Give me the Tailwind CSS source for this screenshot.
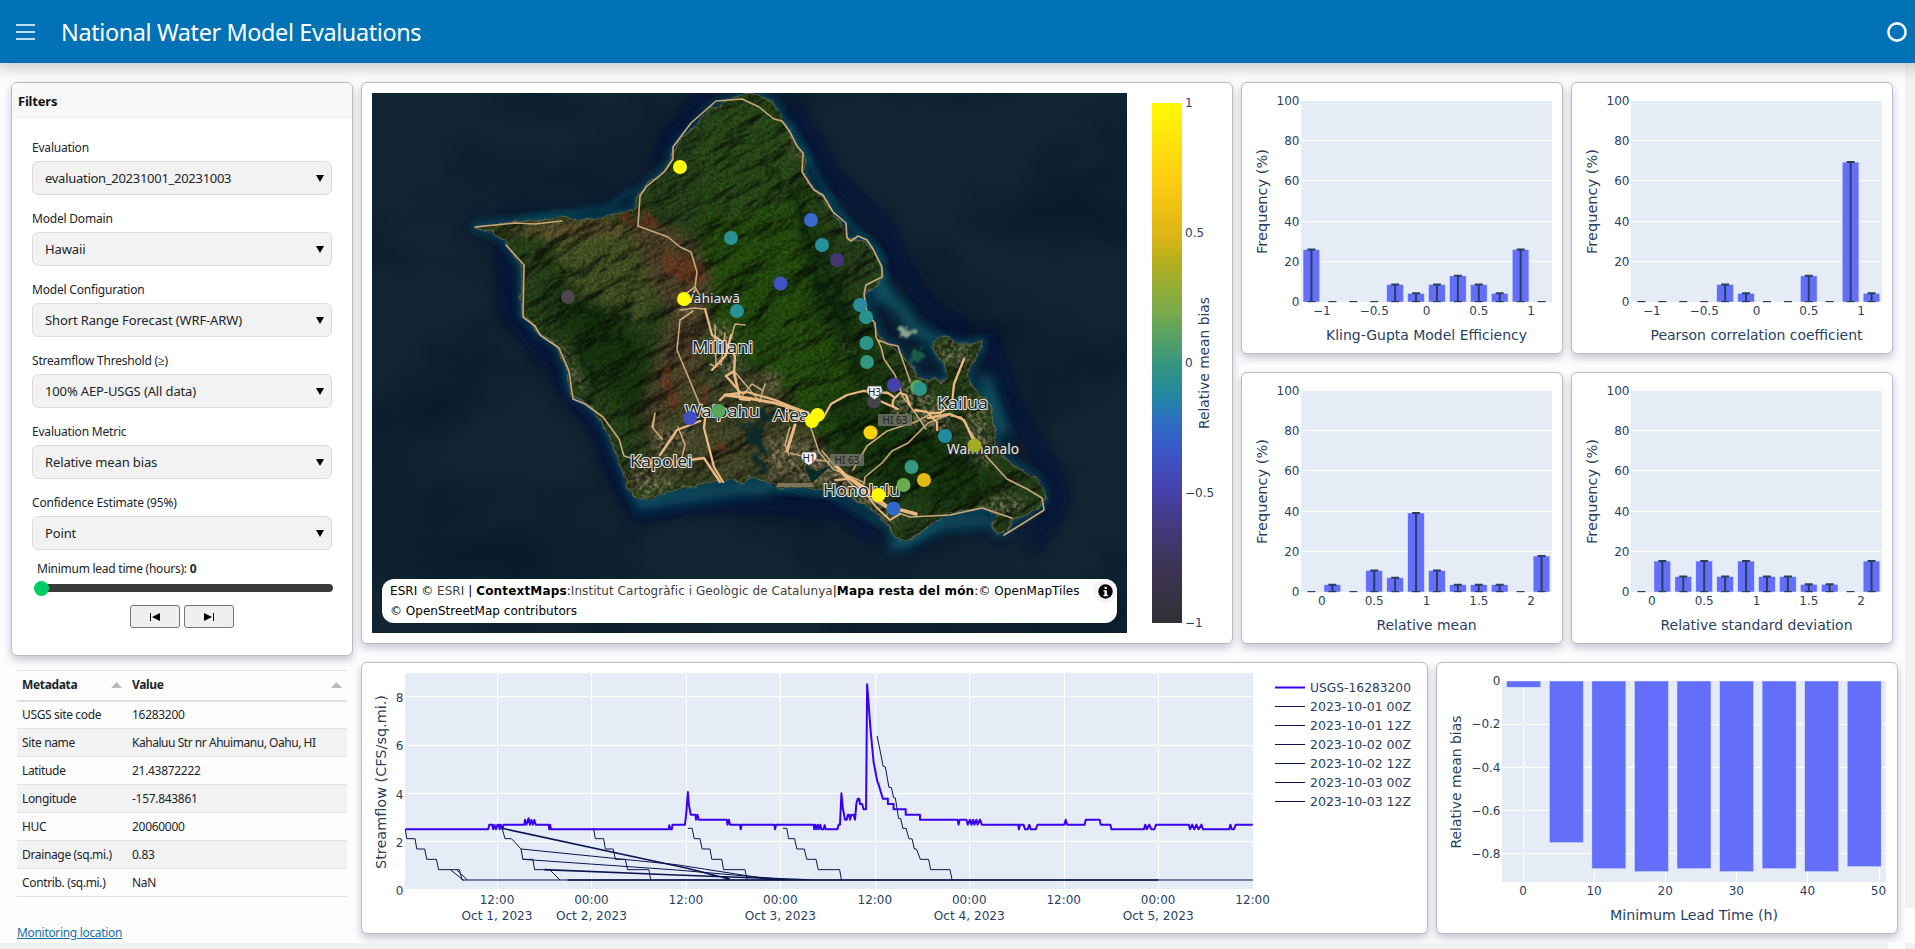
<!DOCTYPE html>
<html lang="en">
<head>
<meta charset="utf-8">
<title>National Water Model Evaluations</title>
<script src="https://cdn.jsdelivr.net/npm/@tailwindcss/browser@4"></script>
</head>
<body class="w-[1915px] h-[949px] overflow-hidden bg-[#fdfdfe] font-['Noto_Sans','Open_Sans',sans-serif] text-[#212529] flex flex-col">
<header class="h-[63px] shrink-0 bg-[#0072b5] flex items-center justify-between pl-4 pr-2 text-white shadow-[0_4px_14px_2px_rgba(0,0,0,0.2)] z-10">
  <div class="flex items-center gap-[26px]">
    <svg class="w-[19px] h-[16px]" viewBox="0 0 19 16" fill="none" stroke="#fff" stroke-width="1.5"><path d="M0 1h19M0 8h19M0 15h19"/></svg>
    <h1 class="text-[23.4px] leading-none tracking-[-0.37px] mt-[3px] whitespace-nowrap">National Water Model Evaluations</h1>
  </div>
  <svg class="w-5 h-5" viewBox="0 0 20 20" fill="none" stroke="#f3faff" stroke-width="2.6"><circle cx="10" cy="10" r="8.6"/></svg>
</header>
<div class="flex flex-1 min-h-0">
  <main class="flex w-[1905px] pl-[11px] pt-[19px] gap-[8px] h-[880px] overflow-hidden">
    <aside class="w-[342px] shrink-0 flex flex-col">
      <section class="h-[574px] shrink-0 rounded-md border border-[#bbbbc3] bg-white shadow-[0_4px_9px_rgba(50,50,93,0.28)] overflow-hidden flex flex-col">
        <h2 class="h-9 bg-[#f7f7f7] pl-[6px] flex items-center text-[13px] font-bold tracking-[-0.2px] text-[#111] pt-px">Filters</h2>
        <div id="filters" class="pl-5 pt-[20px] w-[320px]"></div>
        <div class="pl-6 flex flex-col">
          <div class="text-[12px] leading-4 -mt-1 tracking-[-0.25px] pl-px">Minimum lead time (hours): <b>0</b></div>
          <div class="relative mt-[7px] h-2 w-[297px] rounded-full bg-[#3b3b3b] flex items-center"><i class="absolute -left-[2px] size-[15px] rounded-full bg-[#00cc66]"></i></div>
          <div class="flex gap-1 mt-[13px] ml-[94px]">
            <button class="w-[50px] h-[23px] rounded-[3px] border border-[#767676] bg-[#efefef] flex items-center justify-center"><svg class="w-[10px] h-2" viewBox="0 0 10 8"><path d="M0 0h1v8H0zM10 0v8L2 4z"/></svg></button>
            <button class="w-[50px] h-[23px] rounded-[3px] border border-[#767676] bg-[#efefef] flex items-center justify-center"><svg class="w-[10px] h-2" viewBox="0 0 10 8"><path d="M9 0h1v8H9zM0 0v8l8-4z"/></svg></button>
          </div>
        </div>
      </section>
      <table class="mt-[14px] ml-[6px] w-[330px] table-fixed text-[12px] tracking-[-0.35px] border-t border-[#dee2e6] border-collapse">
        <thead><tr class="h-[30px] border-b-2 border-[#dee2e6] text-left tracking-[-0.35px]">
          <th class="w-[110px] pl-[5px]"><div class="flex items-center justify-between pr-[5px]">Metadata<svg class="w-[11px] h-[6px]" viewBox="0 0 11 6"><path d="M0 6 5.500 0 11 6z" fill="#bbb"/></svg></div></th>
          <th class="pl-[5px]"><div class="flex items-center justify-between pr-[5px]">Value<svg class="w-[11px] h-[6px]" viewBox="0 0 11 6"><path d="M0 6 5.500 0 11 6z" fill="#bbb"/></svg></div></th></tr></thead>
        <tbody id="meta"></tbody>
      </table>
      <a class="mt-[26px] ml-[6px] text-[12px] leading-5 tracking-[-0.32px] text-[#1670a5] underline">Monitoring location</a>
    </aside>
    <div class="flex flex-col gap-[18px]">
      <div class="flex gap-[8px]">
        <section class="w-[872px] h-[562px] rounded-md border border-[#bbbbc3] bg-white shadow-[0_4px_9px_rgba(50,50,93,0.28)] p-[10px] flex">
          <div class="relative w-[755px] h-[540px] shrink-0 overflow-hidden">
            <svg id="map" class="block w-[755px] h-[540px]" viewBox="372 93 755 540">
              <defs>
                <filter id="b3" x="-30%" y="-30%" width="160%" height="160%"><feGaussianBlur stdDeviation="3"/></filter>
                <filter id="b6" x="-30%" y="-30%" width="160%" height="160%"><feGaussianBlur stdDeviation="6"/></filter>
                <filter id="b12" x="-30%" y="-30%" width="160%" height="160%"><feGaussianBlur stdDeviation="11"/></filter>
                <filter id="edge" x="-5%" y="-5%" width="110%" height="110%"><feTurbulence type="fractalNoise" baseFrequency=".09" numOctaves="3" seed="4"/><feDisplacementMap in="SourceGraphic" scale="7" xChannelSelector="R" yChannelSelector="G"/></filter>
                <filter id="patch" x="-30%" y="-30%" width="160%" height="160%"><feTurbulence type="fractalNoise" baseFrequency=".11" numOctaves="3" seed="9"/><feDisplacementMap in="SourceGraphic" scale="22" xChannelSelector="R" yChannelSelector="G"/><feGaussianBlur stdDeviation="1"/></filter>
                <filter id="relief" x="0" y="0" width="100%" height="100%" color-interpolation-filters="sRGB"><feTurbulence type="fractalNoise" baseFrequency=".02 .05" numOctaves="4" seed="12"/><feColorMatrix values="0 0 0 0 0 0 0 0 0 0 0 0 0 0 0 1.200 0 0 0 -.1"/><feDiffuseLighting surfaceScale="5.500" diffuseConstant="1.15" lighting-color="#ffffff"><feDistantLight azimuth="235" elevation="52"/></feDiffuseLighting></filter>
                <filter id="grain" x="0" y="0" width="100%" height="100%" color-interpolation-filters="sRGB"><feTurbulence type="fractalNoise" baseFrequency=".35" numOctaves="3" seed="3"/><feColorMatrix values="1 0 0 0 0 1 0 0 0 0 1 0 0 0 0 0 0 0 0 1"/></filter>
                <filter id="city" x="-20%" y="-20%" width="140%" height="140%" color-interpolation-filters="sRGB"><feGaussianBlur in="SourceAlpha" stdDeviation="5" result="m"/><feTurbulence type="fractalNoise" baseFrequency=".22" numOctaves="3" seed="5"/><feColorMatrix values="0 0 0 0 .55 0 0 0 0 .49 0 0 0 0 .4 3 0 0 0 -1.150"/><feComposite operator="in" in2="m"/></filter>
                <filter id="sea" x="0" y="0" width="100%" height="100%" color-interpolation-filters="sRGB"><feTurbulence type="fractalNoise" baseFrequency=".006 .01" numOctaves="3" seed="8"/><feColorMatrix values="0 0 0 0 0 0 0 0 0 .07 0 0 0 0 .15 2.500 0 0 0 -1.100"/></filter>
                <path id="isle" d="M475 227 495 224 520 222 540 220 560 218 580 220 600 219 615 214 633 211 636 203 638 197 645 188 655 179 662 174 671 161 674 150 682 138 692 130 700 121 708 109 716 107 728 101 738 97 746 94 760 95 772 103 780 113 788 130 795 143 803 152 806 162 804 172 810 185 817 194 825 199 831 209 836 218 843 225 846 234 847 242 855 239 866 243 873 250 879 262 882 275 877 285 867 290 863 297 868 310 873 320 877 333 884 342 893 346 903 355 910 365 918 377 926 381 934 378 942 384 947 377 945 366 938 357 932 346 936 340 945 337 958 344 972 344 982 340 981 350 972 361 968 376 972 388 985 398 992 409 994 424 996 445 1005 459 1020 469 1034 477 1042 487 1045 499 1036 508 1022 517 1012 520 1008 531 997 533 992 526 996 514 986 508 965 510 945 515 930 525 916 536 905 541 894 537 888 525 879 515 870 508 857 501 842 493 820 489 795 487 778 488 764 480 750 477 742 483 734 479 714 482 692 487 670 491 652 498 637 499 628 489 623 473 615 452 610 438 602 422 592 408 582 400 572 395 568 381 567 368 560 353 556 345 545 337 536 330 530 320 522 315 521 300 522 280 521 265 512 252 505 240 490 231Z"/>
                <clipPath id="land"><use href="#isle"/></clipPath>
              </defs>
              <path fill="#102431" d="M372 93h755v540H372z"/>
              <path filter="url(#sea)" opacity=".55" d="M372 93h755v540H372z"/>
              <g fill="#03102e" stroke="#021036" stroke-linejoin="round" filter="url(#b12)">
                <use href="#isle" stroke-width="20" opacity=".5"/>
              </g>
              <g fill="none" stroke="#020f3e" stroke-width="13" stroke-linecap="round" filter="url(#b6)" opacity=".75">
                <path d="M795 112 835 180 885 225 903 270 930 310 960 328M990 338 1003 380 1020 420 1052 470 1062 500 1035 545M560 375 600 430 620 480 640 515 700 503 780 505 840 510 868 535M505 250 508 310 545 360M700 100 664 150"/>
              </g>
              <g fill="none" stroke="#07596b" stroke-linejoin="round">
                <use href="#isle" stroke-width="7" stroke="#074156" filter="url(#b3)"/>
                <path filter="url(#b6)" stroke-width="12" stroke-linecap="round" opacity=".9" d="M878 295 898 305 915 330 932 338M985 380 1003 430M640 504 730 490 768 488M895 545 945 523 985 520M868 262 888 295"/>
                <path filter="url(#b3)" stroke-width="4" stroke-linecap="round" opacity=".75" d="M790 125 820 180 842 215 885 260M632 190 610 207 520 220M568 370 575 392M780 488 830 495 880 525M765 100 790 135"/>
              </g>
              <g filter="url(#patch)" fill="#8ba58c"><ellipse cx="904" cy="332" rx="9" ry="5" transform="rotate(30 904 332)"/><path fill="#1d5a4c" d="m910 350 9-3 6 11-12 4z"/></g>
              <use href="#isle" fill="#2c3d1a" filter="url(#edge)"/>
              <g clip-path="url(#land)">
                <path fill="#253e18" d="M450 90h610v470H450z"/>
                <g filter="url(#b6)">
                  <path fill="#214a11" d="m705 180 60-20 50 50 30 90 10 80 30 50-60 10-80-80-50-60z"/>
                  <path fill="#284719" d="m690 130 60-30 40 30 0 70-70 20z"/>
                  <path fill="#435024" d="m540 235 100-12 30 50-30 50-60-30z"/>
                  <path fill="#4c4127" d="m630 210 60 25 22 40-10 110-40 90-20-50 26-110-30-60z"/>
                  <path fill="#424428" d="m690 380 80-10 40 60 50 60-180-10-60 10z"/>
                  <path fill="#15300c" d="m560 280 70 50 20 20-10 80-50-60-40-60z"/>
                  <path fill="#163510" d="m795 190 35 60 30 70 40 70-30 20-60-110zM820 400l70-20 60 60 50 50-60 20-80-40z"/>
                  <path fill="#65502f" d="m485 228 130-9 20 12-90 5z"/>
                </g>
                <g transform="rotate(-28 760 320)"><path filter="url(#relief)" class="mix-blend-multiply" opacity=".95" d="M420 0h680v640H420z"/></g>
                <g fill="none" stroke="#07190a" stroke-opacity=".7" stroke-width="3" filter="url(#patch)">
                  <path d="m790 185 18 50 4 40 30 40 15 60M810 280l26 32 16 42M770 170l30 40M820 250l30 70M830 440l-30 45M850 430l-20 30M922 425l8 28 60 16M560 300l40 18 30-14M600 345l20-30M580 360l15 20M540 262l30 12 20-6M600 300l-20 50 20 40M632 300l-14 40 22 20"/>
                </g>
                <g fill="none" stroke="#0b1a07" stroke-opacity=".65" stroke-width="3.500" filter="url(#patch)"><path d="m945 470-8 34M960 466l-5 38M975 470l-3 34M990 475l-4 28M923 460l-14 36M1003 480l0 26M908 450l-18 30"/></g>
                <g filter="url(#patch)" fill="#70351f" opacity=".6"><path d="m642 215 20 5-6 10-16-4zM662 262l30 2 6 18-22-2zM668 250l36 15-6 8-34-14zM664 360l8 24 6 30-8-6-8-30zM700 380l10 12-6 10zM690 336l7 16-6 4zM614 214l18-6 0 16zM715 440l12 8-9 10zM690 270l14 6-4 12-10-6z"/></g>
                <g filter="url(#city)" opacity=".8">
                  <path d="m628 470 30 4 24 14-42 12zM675 300l17 4 6 10-17 0zM712 312l20 18 12 40-20 10-14-24zM764 378l18-12-4 18-10 12zM766 434l30 6 16 30-46 8zM806 435l34 34 50 44-12 8-36-30-48-10zM888 390l24-12 32 26 10 32-30-6-30-10zM936 342l38 2-4 24-28-5zM966 390l20 18 8 44-12 20-14-28zM842 338l10 8-2 18zM995 494l35 5-20 18-30-10zM795 125l10 36-12-4zM555 345l10 0 22 44-4 6zM655 428l42 2-8 12-34 14zM858 506l40 10-6 18-10-18z"/>
                </g>
                <path filter="url(#grain)" class="mix-blend-overlay" opacity=".4" d="M470 90h580v460H470z"/>
                <g filter="url(#patch)" fill="#0d2b26"><path d="m757 400 4 12 12 0-2 6-10 6 1 22 4 33-9-6-3-26-9-18-12-5 14-4 8 5z"/></g>
                <path fill="#0b2b29" d="m812 483 20-18-15 6-12-4 4 10z"/>
                <path d="M776 487h38l-2-4h-34z" fill="#80725d"/>
              </g>
              <use href="#isle" fill="none" stroke="#857c60" stroke-opacity=".55" stroke-width="1.200" filter="url(#edge)"/>
              <g fill="none" stroke="#c9a77a" stroke-width="1.600" stroke-linejoin="round" stroke-linecap="round">
                <path d="m475 227 40-4 20 1 27-3M506 245l18 20-1 52 12 9 5 9 19 13 10 23 4 28 12 5 18 13 16 22 5 17 14 4 22 5M638 226l30 11 12 10 11 5 6 20-2 15-15 11M638 226l2-30 6-9 19-16 8-12 0-12 18-24 25-22 26-2 17 8 15 12 8 2 8 11 7 14 6 7-1 19 12 18 9 5 10 17 13 11 1 15 4 3 7-5 9 4 6 9 9 18 0 10-16 8-2 9 3 20 8 9 1 14 5 10 3 12 11 16 8 22 13 17 10 15M878 340l10 4 10 2 5 15 7 20M680 310l14-2 10 1M693 311l-13 9-3 30 5 12 18 43 5 10M653 428l2-15-3 14 10 12M678 427l7 18-4 16M715 325l1 42-6-3M725 333l-4 32M735 372l25 30M760 400l5-16M790 427l-5 18 4 10"/>
                <path d="m695 290-6 11M700 296l-5-9M951 416l10 1 14 22 12 18 20 22 20 10 15 9 2 12-22 14-18 11M948 415l-20 8-20 20-16 8-10 12-17 14-1 7M1012 518l-30-10-32 7-40 2-20-7-20-12-18-13-30-34M809 422l10 30 14 17 30 13M853 470l14-24 20-15 28-9 16-8M790 453l28 7 14 2M745 325l-10-1-4 14M762 390l-10-6-10 12"/>
              </g>
              <g fill="none" stroke="#eab983" stroke-width="2.300" stroke-linejoin="round" stroke-linecap="round">
                <path d="m660 455 17-25 23-9M720 400l5-5 22-3 28 8 30 12 8 4M705 309l7 26 14 9 9 12-1 18 6 24M712 370l14-15 5-20M750 400l-10-1-6-28-8 5 15 17M706 410l-2 18 10 39 9 15M690 460l14-2 16 24M823 418l8-14 16-9 16-4 25 2 6 4M915 410l12 2 10 10 0 8M898 409l-18-8M898 409q-8-2-4-10l6-6 6 2 4 10M928 413l12 0 12-9 2-20 10-25M928 418l22-4 14 6 10 22M795 421v-4"/>
                <path stroke-width="3" d="M725 395 747 398 775 403 808 413M795 425l-8 26"/>
                <path stroke-width="3.600" d="m832 462 14 14 16 10 24 20 30 8"/>
                <path stroke-width="1.800" d="m835 480 15-1 14 12 12 16 14 13 10-6"/>
              </g>
              <g id="labels" class="font-['Noto_Sans',sans-serif]"></g>
              <g id="dots"></g>
              <g id="shields" class="font-['Noto_Sans',sans-serif]"></g>
            </svg>
            <div class="absolute left-[10px] top-[486px] w-[735px] h-[44px] rounded-xl bg-white pl-2 py-[2px] text-[12px] leading-5 text-black font-['DejaVu_Sans',sans-serif] whitespace-nowrap">
              <div class="tracking-[0.05px]">ESRI © <span class="text-[#404040]">ESRI</span> | <b class="tracking-[0.17px]">ContextMaps</b>:<span class="text-[#404040]">Institut Cartogràfic i Geològic de Catalunya</span>|<b class="tracking-[0.17px]">Mapa resta del món</b>:© OpenMapTiles</div>
              <div class="tracking-[0.02px]">© OpenStreetMap contributors</div>
              <div class="absolute right-0 top-0 size-6 rounded-full bg-[#f4f4f4] flex items-center justify-center"><svg class="size-[15px]" viewBox="0 0 15 15"><circle cx="7.500" cy="7.500" r="7.200"/><path fill="#fff" d="M6.500 2.800h2.300v2.200H6.500zM5.500 6.200h3.300v4.600h1v1.400H5.500v-1.400h1V7.600h-1z"/></svg></div>
            </div>
          </div>
          <svg id="cbar" class="block w-[94px] h-[540px] overflow-visible font-['DejaVu_Sans',sans-serif]" viewBox="1127 93 94 540"></svg>
        </section>
        <div class="grid grid-cols-[322px_322px] gap-x-[8px] gap-y-[18px] h-[562px]">
          <section class="h-[272px] rounded-md border border-[#bbbbc3] bg-white shadow-[0_4px_9px_rgba(50,50,93,0.28)]"><svg id="h0" class="block w-[319px] h-[269px] font-['DejaVu_Sans',sans-serif]" viewBox="1242 83 319 269"></svg></section>
          <section class="h-[272px] rounded-md border border-[#bbbbc3] bg-white shadow-[0_4px_9px_rgba(50,50,93,0.28)]"><svg id="h1" class="block w-[319px] h-[269px] font-['DejaVu_Sans',sans-serif]" viewBox="1242 83 319 269"></svg></section>
          <section class="h-[272px] rounded-md border border-[#bbbbc3] bg-white shadow-[0_4px_9px_rgba(50,50,93,0.28)]"><svg id="h2" class="block w-[319px] h-[269px] font-['DejaVu_Sans',sans-serif]" viewBox="1242 83 319 269"></svg></section>
          <section class="h-[272px] rounded-md border border-[#bbbbc3] bg-white shadow-[0_4px_9px_rgba(50,50,93,0.28)]"><svg id="h3" class="block w-[319px] h-[269px] font-['DejaVu_Sans',sans-serif]" viewBox="1242 83 319 269"></svg></section>
        </div>
      </div>
      <div class="flex gap-[8px]">
        <section class="w-[1067px] h-[272px] rounded-md border border-[#bbbbc3] bg-white shadow-[0_4px_9px_rgba(50,50,93,0.28)]"><svg id="ts" class="block w-[1064px] h-[270px] font-['DejaVu_Sans',sans-serif]" viewBox="362 663 1064 270"></svg></section>
        <section class="w-[462px] h-[272px] rounded-md border border-[#bbbbc3] bg-white shadow-[0_4px_9px_rgba(50,50,93,0.28)]"><svg id="lt" class="block w-[459px] h-[270px] font-['DejaVu_Sans',sans-serif]" viewBox="1437 663 459 270"></svg></section>
      </div>
    </div>
  </main>
  <div class="w-[10px] h-[845px] bg-[#f1f1f1]"></div>
</div>
<footer class="h-[6px] shrink-0 flex justify-between"><div class="w-[1888px] bg-[#f1f1f1]"></div><div class="w-[10px] bg-[#f1f1f1]"></div></footer>
<script>
const $ = id => document.getElementById(id);
const INK = '#2a3f5f';
const text = (x, y, s, o = {}) => `<text x="${x}" y="${y}" font-size="${o.size || 12}" fill="${o.fill || INK}" text-anchor="${o.anchor || 'middle'}"${o.len ? ` textLength="${o.len}" lengthAdjust="spacingAndGlyphs"` : ''}${o.rot ? ` transform="rotate(-90 ${x} ${y})"` : ''}>${s}</text>`;

$('filters').innerHTML = [
  ['Evaluation', 'evaluation_20231001_20231003'], ['Model Domain', 'Hawaii'],
  ['Model Configuration', 'Short Range Forecast (WRF-ARW)'], ['Streamflow Threshold (≥)', '100% AEP-USGS (All data)'],
  ['Evaluation Metric', 'Relative mean bias'], ['Confidence Estimate (95%)', 'Point']
].map(([l, v], i) => `<div class="h-[71px]"><div class="text-[12px] leading-[18px] mb-[4px] tracking-[-0.2px]">${l}</div><div class="h-[34px] rounded-md border border-[#dcdcdc] bg-[#f2f2f2] pl-3 pt-px pr-[7px] flex items-center justify-between text-[13px]"><span class="${i ? 'tracking-[-0.13px]' : 'tracking-[-0.28px]'}">${v}</span><svg class="w-2 h-[7px]" viewBox="0 0 8 7"><path d="M0 0h8L4 7z"/></svg></div></div>`).join('');

$('meta').innerHTML = [
  ['USGS site code', '16283200'], ['Site name', 'Kahaluu Str nr Ahuimanu, Oahu, HI'], ['Latitude', '21.43872222'],
  ['Longitude', '-157.843861'], ['HUC', '20060000'], ['Drainage (sq.mi.)', '0.83'], ['Contrib. (sq.mi.)', 'NaN']
].map(([a, b]) => `<tr class="h-7 border-b border-[#dee2e6] even:bg-[#f2f2f2]"><td class="pl-[5px] whitespace-nowrap">${a}</td><td class="pl-[5px] whitespace-nowrap ${b.length > 20 ? 'tracking-[-0.46px]' : 'tracking-[-0.3px]'}">${b}</td></tr>`).join('');

// Map labels: x, baseline, width, size, name, light-on-dark
$('labels').innerHTML = [
  [692, 353, 61, 17, 'Mililani'], [685, 417, 75, 17, 'Waipahu'], [773, 421, 36, 17, 'Aiea'], [630, 467, 62, 17, 'Kapolei'],
  [937, 409, 51, 17, 'Kailua'], [823, 496, 77, 17, 'Honolulu'], [947, 454, 72, 14, 'Waimanalo', 1], [681, 303, 59, 13, 'Wahiawā', 1]
].map(([x, y, w, s, n, l]) => `<text x="${x}" y="${y}" font-size="${s}" textLength="${w}" lengthAdjust="spacingAndGlyphs" fill="${l ? '#e4e4e4' : '#222828'}" stroke="${l ? '#252c25' : '#e8e6e0'}" stroke-width="2" stroke-linejoin="round" paint-order="stroke">${n}</text>`).join('')
 + [[895, 420], [847, 460]].map(([x, y]) => `<rect x="${x - 17}" y="${y - 6}" width="34" height="12" rx="1" fill="#74746a" fill-opacity=".8"/>` + text(x, y + 3.500, 'HI 63', { size: 10, fill: '#1f241e' })).join('');
$('shields').innerHTML = [[809, 458, 'H1'], [874.5, 392, 'H3']].map(([x, y, n]) => `<path d="M${x - 6.500} ${y - 6}h13l1.500 4q0 5-8 9.500q-8-4.500-8-9.500z" fill="#f2f2f2" stroke="#555" stroke-width=".8"/>` + text(x, y + 3.600, n, { size: 10, fill: '#222' })).join('');

$('dots').innerHTML = [
  [680, 167, '#fffa05'], [731, 238, '#2b9292'], [811, 220, '#3a68cf'], [822, 245, '#26909c'], [837, 260, '#433873'],
  [568, 297, '#4b474b'], [684, 299, '#fffa05'], [737, 311, '#2b9292'], [780.5, 283.5, '#4053c4'], [860, 305, '#278ea0'],
  [866, 317, '#2b9292'], [866.5, 343, '#2e948a'], [867, 362, '#35977f'], [874, 401.500, '#474247'], [894, 385, '#4542ac'],
  [917, 387, '#5ca659'], [920, 389, '#2e948a'], [690, 418, '#4050c2'], [718.5, 411, '#58a55c'], [817.5, 415, '#fffa05'],
  [812, 421, '#fffa05'], [870.500, 432.500, '#ffd00b'], [945, 436, '#238ba0'], [974.500, 445.500, '#a0ad25'], [911.500, 467, '#35977f'],
  [903.500, 485, '#6baa4c'], [924, 480, '#e3b912'], [878.500, 495, '#fffa05'], [893.500, 508.500, '#3069cb']
].map(([x, y, c]) => `<circle cx="${x}" cy="${y}" r="7" fill="${c}"/>`).join('');

$('cbar').innerHTML = `<defs><linearGradient id="thermal" x1="0" y1="1" x2="0" y2="0">${
  [[0, '#333035'], [.1, '#3b3351'], [.18, '#44397a'], [.26, '#4542ae'], [.34, '#385ac8'], [.39, '#2e70c0'], [.44, '#20889f'], [.5, '#37967e'], [.6, '#79ab4a'], [.7, '#b9af1c'], [.75, '#dfb614'], [.85, '#ffcc12'], [1, '#fffa05']]
    .map(([o, c]) => `<stop offset="${o}" stop-color="${c}"/>`).join('')
  }</linearGradient></defs><rect x="1152" y="103" width="30" height="520" fill="url(#thermal)"/>`
  + [['1', 103], ['0.5', 233], ['0', 363], ['−0.5', 493], ['−1', 623]].map(([t, y]) => text(1185, y + 4, t, { anchor: 'start' })).join('')
  + text(1209, 363, 'Relative mean bias', { size: 14, rot: 1, len: 132 });

// 12-bin histograms with error bars
function hist(id, vals, labels, title, len) {
  const X = 1301, Y = 302, W = 251, H = 201, step = W / 12;
  let s = `<path fill="#e5ecf6" d="M${X} ${Y - H}h${W}v${H}h-${W}z"/>`;
  for (const v of [20, 40, 60, 80]) s += `<path stroke="#fff" d="M${X} ${Math.round(Y - 2.01 * v) - .5}h${W}"/>`;
  for (let v = 0; v <= 100; v += 20) s += text(1299.500, Y - 2.01 * v + 4, v, { anchor: 'end' });
  vals.forEach((v, i) => {
    const c = X + step * (i + .5), y = Y - 2.01 * v;
    if (v) s += `<rect x="${c - 8.4}" y="${y}" width="16.700" height="${2.01 * v}" fill="#636efa" stroke="#e5ecf6" stroke-width=".5"/><path stroke="${INK}" stroke-width="2" d="M${c} ${Y}V${y}M${c - 4} ${y}h8"/>`;
    s += `<path stroke="${INK}" stroke-width="1.200" d="M${c - 4} ${Y - .4}h8"/>`;
  });
  labels.forEach((l, i) => s += text(1321.900 + 52.300 * i, 315, l));
  s += text(1266.500, 201.500, 'Frequency (%)', { size: 14, rot: 1, len: 105 }) + text(1426.500, 340, title, { size: 14, len });
  $(id).innerHTML = s;
}
const A = ['−1', '−0.5', '0', '0.5', '1'], B = ['0', '0.5', '1', '1.5', '2'];
hist('h0', [26.1, 0, 0, 0, 8.7, 4.35, 8.7, 13, 8.7, 4.35, 26.1, 0], A, 'Kling-Gupta Model Efficiency', 201);
hist('h1', [0, 0, 0, 0, 8.7, 4.35, 0, 0, 13, 0, 69.6, 4.35], A, 'Pearson correlation coefficient', 212);
hist('h2', [0, 3.6, 0, 10.7, 7.1, 39.3, 10.7, 3.6, 3.6, 3.6, 0, 17.9], B, 'Relative mean', 100);
hist('h3', [0, 15.4, 7.7, 15.4, 7.7, 15.4, 7.7, 7.7, 3.85, 3.85, 0, 15.4], B, 'Relative standard deviation', 192);

// Streamflow time series
{
  let s = '<path fill="#e5ecf6" d="M405 673h848v216H405z"/><g stroke="#fff">';
  for (const y of [841.5, 793.5, 745.5, 696.5]) s += `<path d="M405 ${y}h848"/>`;
  for (let i = 0; i < 8; i++) s += `<path d="M${Math.round(497 + 94.450 * i) + .5} 673v216"/>`;
  s += '</g>';
  [[0, 890], [2, 842], [4, 794], [6, 745.500], [8, 697]].forEach(([v, y]) => s += text(403.500, y + 4.500, v, { anchor: 'end' }));
  const dates = { 0: 'Oct 1, 2023', 1: 'Oct 2, 2023', 3: 'Oct 3, 2023', 5: 'Oct 4, 2023', 7: 'Oct 5, 2023' };
  for (let i = 0; i < 9; i++) {
    const x = 497 + 94.450 * i;
    s += text(x, 904, i % 2 ? '00:00' : '12:00');
    if (dates[i]) s += text(x, 920, dates[i], { len: 71 });
  }
  const fine = [
    'M412 520 420 551H438L465 582 470 613H498L503 644H545L574 675',
    'M141 523 145 551H168L173 582H195L201 613H228L234 644H292L300 675H2514M268 645 304 676M285 645 315 675',
    'M668 520 673 551H696L701 582H723L729 613H757L763 644H823L828 675',
    'M932 520H944L950 551H966L972 582H994L999 613H1027L1032 644H1092L1098 675',
    'M1198 520H1209L1214 551H1231L1237 582H1258L1265 613H1291L1297 644H1357L1362 675',
    'M1462 243 1479 334 1485 336 1495 397 1502 398 1508 428 1513 429 1522 490 1528 491 1534 520H1543L1551 551 1560 552 1566 582H1572L1583 613H1606L1612 644H1666L1672 675',
    'M465 582 900 629 1150 671M470 613 900 645 1200 673'];
  const bold = 'M412 520 930 640 1050 673M530 644 900 660 1280 675M595 675H2250';
  const usgs = 'M141 523H373L376 509H384L387 523 390 509 395 523 399 509H403L405 523 408 509 413 523 416 509H474L476 494 480 509 486 490 490 509 494 495 498 509 502 495 506 509H542L544 523 546 509 549 523H878L880 511 883 523H887L889 509H924L928 470 932 411 935 450 940 479H953L955 494 959 479 962 494H1041L1043 509 1047 494 1050 509H1078L1080 523 1083 509H1174L1176 523 1179 509H1284L1286 523 1289 509 1292 523 1296 509 1299 523 1303 509 1306 523H1312L1315 511 1318 523H1351L1354 509H1358L1362 415 1366 460 1372 494H1377L1380 479H1384L1386 494 1390 479H1396L1400 494 1404 445 1408 431H1412L1414 447H1420L1424 463H1431L1434 88 1444 230 1452 320 1462 377 1468 395 1478 431H1492V447H1508V463H1542V479H1582V494H1687L1690 509 1693 494H1712L1716 509 1722 494 1726 509 1731 494 1734 509 1740 494 1743 509 1750 494 1755 509H1857L1859 523 1862 509H1872L1876 523H1884L1888 509 1892 523H1906L1911 509H1986L1990 494 1994 509H2043L2046 494H2085L2088 509H2115L2118 523H2209L2213 509 2217 523 2224 509 2230 523 2238 523 2243 509H2335L2338 523 2344 509 2350 523 2356 509 2362 523 2370 509 2374 523H2448L2451 509 2455 523 2461 523 2466 509H2514';
  s += '<g transform="translate(355 655) scale(.35714 .33333)" fill="none" stroke-linejoin="round">'
    + `<path d="${usgs}" stroke="#3a00f0" stroke-width="2" vector-effect="non-scaling-stroke"/>`
    + fine.map(d => `<path d="${d}" stroke="#0b1551" stroke-width="1" vector-effect="non-scaling-stroke"/>`).join('')
    + `<path d="${bold}" stroke="#0b1551" stroke-width="1.600" vector-effect="non-scaling-stroke"/></g>`;
  ['USGS-16283200', '2023-10-01 00Z', '2023-10-01 12Z', '2023-10-02 00Z', '2023-10-02 12Z', '2023-10-03 00Z', '2023-10-03 12Z'].forEach((l, i) => {
    const y = 687.500 + 19 * i;
    s += `<path d="M1275 ${y}h30" stroke="${i ? '#0b1551' : '#3a00f0'}" stroke-width="${i ? 1 : 2}"/>` + text(1310, y + 4.500, l, { anchor: 'start', len: 101 });
  });
  s += text(386, 782, 'Streamflow (CFS/sq.mi.)', { size: 14, rot: 1, len: 174 });
  $('ts').innerHTML = s;
}

// Metric by minimum lead time
{
  let s = '<path fill="#e5ecf6" d="M1502 681h384v201h-384z"/><g stroke="#fff">';
  for (let i = 1; i < 5; i++) s += `<path d="M1502 ${Math.round(681 + 43.100 * i) + .5}h384"/>`;
  for (let i = 0; i < 6; i++) s += `<path d="M${Math.round(1523 + 71.100 * i) + .5} 681v201"/>`;
  s += '</g>';
  [6.300, 161.700, 187.700, 190.700, 187.700, 190.700, 187.700, 190.700, 185.700].forEach((h, i) => s += `<rect x="${1506.800 + 42.550 * i}" y="681" width="34" height="${h}" fill="#636efa" stroke="#e5ecf6" stroke-width=".5"/>`);
  ['0', '−0.2', '−0.4', '−0.6', '−0.8'].forEach((l, i) => s += text(1500.500, 685.300 + 43.100 * i, l, { anchor: 'end' }));
  for (let i = 0; i < 6; i++) s += text(1523 + 71.100 * i, 895, i * 10);
  s += text(1461, 782, 'Relative mean bias', { size: 14, rot: 1, len: 133 }) + text(1694, 920, 'Minimum Lead Time (h)', { size: 14, len: 168 });
  $('lt').innerHTML = s;
}
</script>
</body>
</html>
